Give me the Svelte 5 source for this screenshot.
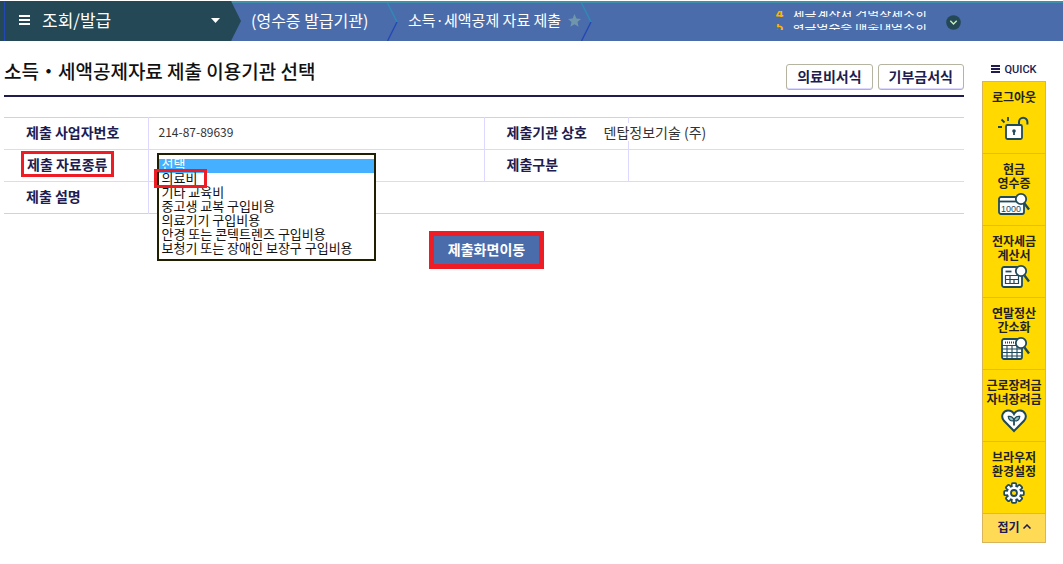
<script lang="ts">
  type QuickItem = { icon: string; lines: string[] };

  const notices = [
    { no: 4, text: '세금계산서 건별상세조회' },
    { no: 5, text: '현금영수증 매출내역조회' }
  ];

  const materials = [
    '선택',
    '의료비',
    '기타 교육비',
    '중고생 교복 구입비용',
    '의료기기 구입비용',
    '안경 또는 콘텍트렌즈 구입비용',
    '보청기 또는 장애인 보장구 구입비용'
  ];

  const quickItems: QuickItem[] = [
    { icon: 'lock', lines: ['로그아웃'] },
    { icon: 'cash', lines: ['현금', '영수증'] },
    { icon: 'tax', lines: ['전자세금', '계산서'] },
    { icon: 'year', lines: ['연말정산', '간소화'] },
    { icon: 'heart', lines: ['근로장려금', '자녀장려금'] },
    { icon: 'gear', lines: ['브라우저', '환경설정'] }
  ];

  let material = $state('선택');
</script>

{#snippet separator()}
  <svg class="separator" width="11" height="38" viewBox="0 0 11 38" fill="none" stroke-width="1.4">
    <path d="M0.5 0 L10 19" stroke="#2f8ab5"/>
    <path d="M10 19 L0.5 38" stroke="#2348b4"/>
  </svg>
{/snippet}

{#snippet magnifier()}
  <circle cx="24" cy="7" r="5.2" fill="#fff" stroke="#1f4a5c" stroke-width="1.8"/>
  <path d="M27.5 11.5 L32 17.5" stroke="#1f4a5c" stroke-width="2.4"/>
{/snippet}

<header class="topbar">
  <button class="menu-tab">
    <svg width="11" height="10" viewBox="0 0 11 10" fill="#fff">
      <rect width="11" height="2"/><rect y="4" width="11" height="2"/><rect y="8" width="11" height="2"/>
    </svg>
    <span>조회/발급</span>
    <svg class="caret" width="9" height="5" viewBox="0 0 9 5" fill="#fff"><path d="M0 0h9L4.5 5z"/></svg>
  </button>
  <nav class="crumbs">
    <a class="crumb first" href="#issuer">(영수증 발급기관)</a>
    {@render separator()}
    <a class="crumb second" href="#submit">
      소득·세액공제 자료 제출
      <svg width="13" height="13" viewBox="0 0 13 13" fill="#7096ab">
        <path d="M6.5 0 L8.4 4.4 L13 4.9 L9.5 8 L10.6 12.8 L6.5 10.3 L2.4 12.8 L3.5 8 L0 4.9 L4.6 4.4z"/>
      </svg>
    </a>
    {@render separator()}
  </nav>
  <ul class="notices">
    {#each notices as notice}
      <li><b>{notice.no}</b><span>{notice.text}</span></li>
    {/each}
  </ul>
  <button class="more" aria-label="더보기">
    <svg width="15" height="15" viewBox="0 0 15 15">
      <circle cx="7.5" cy="7.5" r="7.3" fill="#244855"/>
      <path d="M4.3 5.8 L7.5 9 L10.7 5.8" fill="none" stroke="#c5f0b8" stroke-width="1.4"/>
    </svg>
  </button>
</header>

<div class="page">
  <main>
    <div class="title-row">
      <h1>소득・세액공제자료 제출 이용기관 선택</h1>
      <button class="form-btn">의료비서식</button>
      <button class="form-btn">기부금서식</button>
    </div>

    <table>
      <tbody>
        <tr>
          <th>제출 사업자번호</th>
          <td class="number">214-87-89639</td>
          <th>제출기관 상호</th>
          <td><span class="company">덴탑정보기술 (주)</span></td>
        </tr>
        <tr>
          <th><label class="marked" for="material">제출 자료종류</label></th>
          <td class="picker">
            <select id="material" size="7" bind:value={material}>
              {#each materials as name}
                <option value={name}>{name}</option>
              {/each}
            </select>
            <span class="option-mark"></span>
          </td>
          <th>제출구분</th>
          <td></td>
        </tr>
        <tr>
          <th>제출 설명</th>
          <td colspan="3"></td>
        </tr>
      </tbody>
    </table>

    <div class="actions">
      <button class="submit">제출화면이동</button>
    </div>
  </main>

  <aside>
    <div class="quick-title">
      <svg width="9" height="8" viewBox="0 0 9 8" fill="#201c50">
        <rect width="9" height="2"/><rect y="3" width="9" height="2"/><rect y="6" width="9" height="2"/>
      </svg>
      QUICK
    </div>
    <div class="quick-box">
      {#each quickItems as item}
        <a class="quick-item" href="#{item.icon}">
          <span>{#each item.lines as line, i}{#if i > 0}<br>{/if}{line}{/each}</span>
          <svg width="34" height="26" viewBox="0 0 34 26" fill="none" stroke="#1f4a5c" stroke-width="1.8">
            {#if item.icon === 'lock'}
              <path d="M22 11V7a4.2 4.2 0 0 1 8.4 0v2.5" stroke-width="2"/>
              <rect x="9" y="10" width="16" height="14" rx="1.5" fill="#fff"/>
              <circle cx="17" cy="16" r="1.8" fill="#1f4a5c" stroke="none"/>
              <path d="M17 16v4M11 2v4M4.5 4.5l3 3M1 12h4"/>
            {:else if item.icon === 'cash'}
              <rect x="2" y="5" width="25" height="17" rx="2" fill="#fff"/>
              <path d="M2 9.5h25"/>
              <text x="4" y="20" font-size="9" fill="#1f4a5c" stroke="none">1000</text>
              {@render magnifier()}
            {:else if item.icon === 'tax'}
              <rect x="5" y="3" width="20" height="20" rx="2" fill="#fff"/>
              <path d="M8.5 7.5h6"/>
              <path d="M8.5 11.5h13v8h-13zM8.5 15.5h13M13 11.5v8M17 15.5v4" stroke-width="1.2"/>
              {@render magnifier()}
            {:else if item.icon === 'year'}
              <rect x="5" y="3" width="20" height="20" rx="2" fill="#fff"/>
              <path d="M8 6.5h10" stroke-dasharray="1 1"/>
              <path d="M5 9.5h20M5 13h20M5 16.5h20M5 20h20M10 9.5V23M15 9.5V23M20 9.5V23" stroke-width="1.1"/>
              {@render magnifier()}
            {:else if item.icon === 'heart'}
              <path d="M17 23 L7 12.8 C3 8 6.5 2.5 11 2.5 C14 2.5 16 4 17 6 C18 4 20 2.5 23 2.5 C27.5 2.5 31 8 27 12.8z" fill="#fff" stroke-width="2"/>
              <path d="M17 17.5v-5" stroke-width="1.8"/>
              <path d="M17 12.5c-3 1-5.5-.5-5.7-4 3-.5 5.4 1 5.7 4zM17 12.5c3 1 5.5-.5 5.7-4-3-.5-5.4 1-5.7 4z" fill="#8fc1c0" stroke-width="1.3"/>
            {:else}
              <g transform="translate(17 13)">
                {#each [0, 45, 90, 135, 180, 225, 270, 315] as angle}
                  <rect x="-2.2" y="-9.8" width="4.4" height="5" rx="1" fill="#fff" stroke-width="1.8" transform="rotate({angle})"/>
                {/each}
                <circle r="7" fill="#fff" stroke-width="1.6"/>
                {#each [0, 45, 90, 135, 180, 225, 270, 315] as angle}
                  <rect x="-1.3" y="-8.6" width="2.6" height="4" fill="#fff" stroke="none" transform="rotate({angle})"/>
                {/each}
                <circle r="3" fill="#ffd900"/>
              </g>
            {/if}
          </svg>
        </a>
      {/each}
      <button class="fold">
        접기
        <svg width="8" height="5" viewBox="0 0 8 5" fill="none" stroke="#201c50" stroke-width="1.5"><path d="M.5 4.5 L4 1 L7.5 4.5"/></svg>
      </button>
    </div>
  </aside>
</div>

<style>
  :global(body) {
    margin: 0;
    background: #fff;
    color: #222;
    font-family: 'Noto Sans CJK KR', 'Noto Sans', sans-serif;
  }
  button {
    font-family: inherit;
    margin: 0;
    cursor: pointer;
  }
  a {
    color: inherit;
    text-decoration: none;
  }

  /* Top bar */
  .topbar {
    display: flex;
    align-items: center;
    height: 38px;
    margin-top: 1px;
    border-top: 2px solid #4090ac;
    background: #4a6cab;
    color: #fff;
  }
  .menu-tab {
    display: flex;
    align-items: center;
    gap: 12px;
    box-sizing: border-box;
    width: 237px;
    height: 40px;
    margin: -2px 0 0 4px;
    padding: 0 21px 2px 14px;
    border: 0;
    border-left: 1px solid #2348b4;
    box-shadow: -4px 0 #244855;
    background: #244855;
    clip-path: polygon(-4px 0, 227px 0, 100% 50%, 227px 100%, -4px 100%);
    color: #fff;
    font-size: 17px;
    line-height: 24px;
  }
  .caret {
    margin-left: auto;
  }
  .crumbs {
    display: flex;
    align-items: center;
    line-height: 24px;
    white-space: nowrap;
  }
  .crumb {
    box-sizing: border-box;
    padding: 0 0 4px 10px;
  }
  .first {
    min-width: 146px;
    font-size: 16px;
  }
  .second {
    display: flex;
    align-items: center;
    gap: 7px;
    min-width: 183px;
    font-size: 15px;
  }
  .separator {
    flex-shrink: 0;
  }
  .notices {
    display: flex;
    flex-direction: column;
    gap: 7px;
    margin: 0 19px 0 auto;
    padding: 0 0 4px;
    list-style: none;
    font-size: 13px;
    line-height: 6px;
    white-space: nowrap;
  }
  .notices li {
    display: flex;
    gap: 9px;
    height: 6px;
    overflow: hidden;
  }
  .notices b {
    color: #ffb400;
  }
  .more {
    display: flex;
    margin-right: 102px;
    padding: 0;
    border: 0;
    background: none;
  }

  /* Page */
  .page {
    display: grid;
    grid-template-columns: minmax(0, 1fr) 64px;
    align-items: start;
    gap: 18px;
    padding: 0 17px 0 4px;
  }
  .title-row {
    display: flex;
    align-items: center;
    gap: 5px;
    height: 54px;
    border-bottom: 2px solid #201c50;
  }
  h1 {
    flex: 1;
    margin: 0;
    padding-top: 5px;
    color: #111;
    font-size: 19px;
    font-weight: 500;
    line-height: 24px;
  }
  .form-btn {
    height: 26px;
    margin-top: 18px;
    padding: 0 10px 3px;
    border: 1px solid #b4b4a0;
    border-radius: 3px;
    box-shadow: inset 0 -1px #dcd8ff;
    background: #fff;
    color: #201c50;
    font-size: 14px;
    font-weight: 700;
    line-height: 20px;
  }

  /* Submission table */
  table {
    width: 100%;
    margin-top: 20px;
    table-layout: fixed;
    border-collapse: collapse;
    border-top: 1px solid #d8d8a8;
    border-bottom: 1px solid #d8d8a8;
  }
  th, td {
    box-sizing: border-box;
    height: 32px;
    padding: 0 0 4px;
    text-align: left;
    line-height: 20px;
  }
  th {
    width: 15%;
    padding-left: 22px;
    border-right: 1px solid #dcd8ff;
    color: #201c50;
    font-size: 14px;
    font-weight: 700;
    white-space: nowrap;
  }
  td {
    width: 35%;
    padding-left: 10px;
    color: #333;
    font-size: 14px;
  }
  tr + tr th, tr + tr td {
    border-top: 1px solid #dcd8ff;
  }
  td + th {
    border-left: 1px solid #dcd8ff;
  }
  .number {
    font-size: 12px;
  }
  .company {
    position: relative;
    display: block;
    width: max-content;
    margin-left: -35px;
    background: #fff;
    line-height: 18px;
  }
  .marked {
    display: block;
    width: max-content;
    margin-left: -5px;
    padding: 0 4px 0 3px;
    border: 3px solid #ee1c25;
  }
  .picker {
    position: relative;
  }
  select {
    position: absolute;
    top: 3px;
    left: 8px;
    z-index: 1;
    box-sizing: border-box;
    width: 219px;
    height: 108px;
    padding: 4px 0 0;
    border: 2px solid #202000;
    border-radius: 0;
    outline: 0;
    background: #fff;
    color: #111;
    font-family: inherit;
    font-size: 13px;
    overflow: hidden;
  }
  option {
    display: flex;
    align-items: center;
    box-sizing: border-box;
    height: 14px;
    min-height: 14px;
    padding: 0 3px 5px;
    overflow: visible;
    color: #111;
  }
  option:checked {
    background: linear-gradient(#44b0ff, #44b0ff);
    color: #fff;
  }
  .option-mark {
    position: absolute;
    top: 19px;
    left: 5px;
    z-index: 2;
    box-sizing: border-box;
    width: 53px;
    height: 19px;
    border: 3px solid #ee1c25;
    pointer-events: none;
  }
  .actions {
    display: flex;
    justify-content: center;
    margin-top: 17px;
    padding-left: 5px;
  }
  .submit {
    height: 38px;
    padding: 0 14px 2px;
    border: 5px solid #ee1c25;
    background: #4a6cab;
    color: #fff;
    font-size: 14px;
    font-weight: 700;
    line-height: 20px;
  }

  /* Quick menu */
  .quick-title {
    display: flex;
    align-items: center;
    justify-content: center;
    gap: 4px;
    height: 16px;
    padding: 20px 0 4px;
    color: #201c50;
    font-family: Roboto, sans-serif;
    font-size: 11px;
    font-weight: 500;
  }
  .quick-box {
    border: 1px solid #d8b45c;
    background: #ffd900;
    font-size: 12px;
    font-weight: 700;
    line-height: 14px;
    text-align: center;
  }
  .quick-item {
    display: flex;
    flex-direction: column;
    align-items: center;
    justify-content: space-between;
    box-sizing: border-box;
    height: 72px;
    padding: 8px 0 7px;
    border-bottom: 1px solid #d8b45c;
    color: #222;
    white-space: nowrap;
  }
  .quick-item:first-child {
    padding-bottom: 12px;
  }
  .quick-item text {
    font-family: 'Liberation Sans', sans-serif;
    font-weight: 400;
  }
  .fold {
    display: flex;
    align-items: center;
    justify-content: center;
    gap: 3px;
    width: 100%;
    height: 28px;
    padding: 0 0 3px;
    border: 0;
    background: #ffdb55;
    color: #201c50;
    font-size: 12px;
    font-weight: 700;
  }
</style>
